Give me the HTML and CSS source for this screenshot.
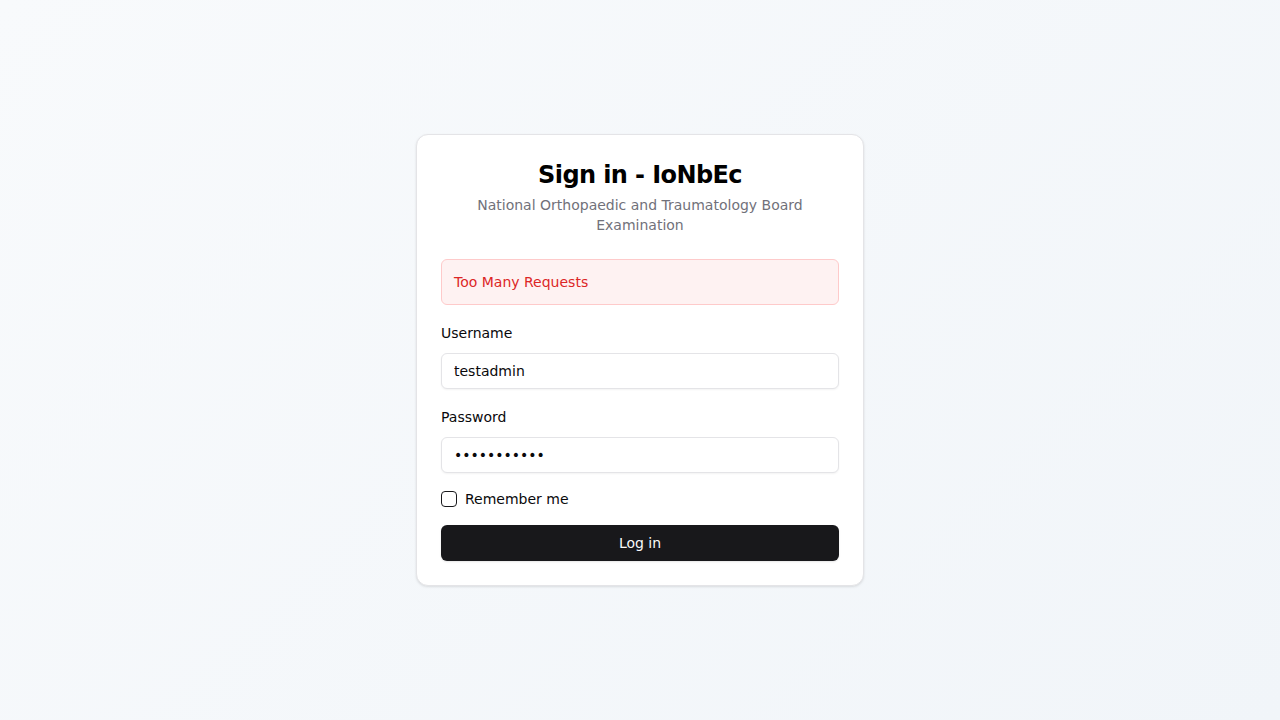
FILE: index.html
```html
<!DOCTYPE html>
<html lang="en">
<head>
<meta charset="utf-8">
<title>Sign in - IoNbEc</title>
<link rel="stylesheet" href="styles.css">
</head>
<body>
<main class="page">
  <div class="card">
    <div class="header">
      <h1 class="title">Sign in - IoNbEc</h1>
      <p class="subtitle">National Orthopaedic and Traumatology Board Examination</p>
    </div>
    <div class="alert">Too Many Requests</div>
    <form class="form">
      <div class="field">
        <label class="label" for="username">Username</label>
        <input class="input" id="username" type="text" value="testadmin">
      </div>
      <div class="field">
        <label class="label" for="password">Password</label>
        <input class="input" id="password" type="password" value="password123">
      </div>
      <label class="remember">
        <input class="checkbox" type="checkbox">
        <span>Remember me</span>
      </label>
      <button class="button" type="button">Log in</button>
    </form>
  </div>
</main>
</body>
</html>
```
FILE: styles.css
```css
* { box-sizing: border-box; }
html, body { margin: 0; padding: 0; height: 100%; }
body {
  font-family: "DejaVu Sans", sans-serif;
  background: linear-gradient(135deg, #f8fafc 0%, #f1f5f9 100%);
  color: #09090b;
}
.page {
  min-height: 100vh;
  display: flex;
  align-items: center;
  justify-content: center;
}
.card {
  width: 448px;
  background: #ffffff;
  border: 1px solid #e4e4e7;
  border-radius: 12px;
  box-shadow: 0 1px 3px rgba(0,0,0,0.08), 0 1px 2px rgba(0,0,0,0.04);
  padding: 24px;
}
.header { text-align: center; }
.title {
  margin: 0;
  font-size: 24px;
  line-height: 32px;
  font-weight: 700;
  letter-spacing: -0.025em;
  color: #000;
}
.subtitle {
  margin: 4px 0 0;
  font-size: 14px;
  line-height: 20px;
  color: #71717a;
  padding: 0 12px;
}
.alert {
  margin-top: 24px;
  padding: 12px;
  border: 1px solid #fecaca;
  background: #fef2f2;
  color: #dc2626;
  border-radius: 6px;
  font-size: 14px;
  line-height: 20px;
}
.form {
  margin-top: 16px;
  display: flex;
  flex-direction: column;
  gap: 16px;
}
.field { display: flex; flex-direction: column; gap: 8px; }
.label {
  font-size: 14px;
  line-height: 24px;
  color: #09090b;
}
.input {
  height: 36px;
  width: 100%;
  border: 1px solid #e4e4e7;
  border-radius: 6px;
  padding: 0 12px;
  font-family: "DejaVu Sans", sans-serif;
  font-size: 14px;
  color: #09090b;
  background: #fff;
  box-shadow: 0 1px 2px rgba(0,0,0,0.05);
  outline: none;
}
.remember {
  display: flex;
  align-items: center;
  gap: 8px;
  height: 20px;
  font-size: 14px;
  color: #09090b;
}
.checkbox {
  appearance: none;
  -webkit-appearance: none;
  margin: 0;
  width: 16px;
  height: 16px;
  border: 1px solid #18181b;
  border-radius: 4px;
  background: #fff;
}
.button {
  height: 36px;
  width: 100%;
  border: none;
  border-radius: 6px;
  background: #18181b;
  color: #fafafa;
  font-family: "DejaVu Sans", sans-serif;
  font-size: 14px;
  box-shadow: 0 1px 2px rgba(0,0,0,0.1);
}
```
